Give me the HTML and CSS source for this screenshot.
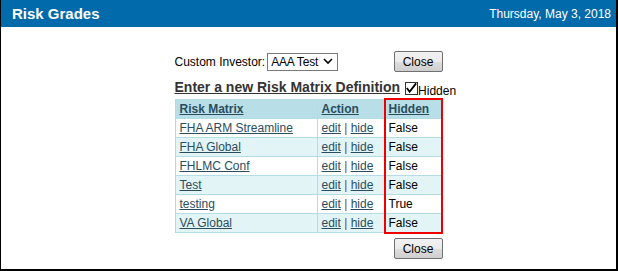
FILE: index.html
```html
<!DOCTYPE html>
<html lang="en">
<head>
  <meta charset="UTF-8" />
  <title>Risk Grades</title>
  <link rel="stylesheet" href="styles.css">
</head>
<body>
  <div class="frame">
    <!-- Title bar -->
    <header class="titlebar">
      <h1>Risk Grades</h1>
      <span class="date">Thursday, May 3, 2018</span>
    </header>

    <main class="panel">
      <div class="investor-row">
        <label class="investor">
          <span>Custom Investor:</span>
          <span class="select"><span>AAA Test</span>
            <svg width="10" height="7" viewBox="0 0 10 7"><path d="M1 1 L5 5 L9 1" fill="none" stroke="#000" stroke-width="1.6"/></svg>
          </span>
        </label>
        <button class="btn">Close</button>
      </div>

      <div class="title-row">
        <a class="new-link" href="#">Enter a new Risk Matrix Definition</a>
        <span class="check">
          <span class="box"><svg width="13" height="13" viewBox="0 0 13 13"><path d="M2 6 L5 10 L12 1" fill="none" stroke="#000" stroke-width="2"/></svg></span>
          <span class="check-label">Hidden</span>
        </span>
      </div>

      <div class="grid-wrap">
        <table class="grid">
          <thead>
            <tr><th class="c-name"><a href="#">Risk Matrix</a></th><th class="c-act"><a href="#">Action</a></th><th class="c-hid"><a href="#">Hidden</a></th></tr>
          </thead>
          <tbody>
            <tr><td><a href="#">FHA ARM Streamline</a></td><td><a href="#">edit</a> <span class="sep">|</span> <a href="#">hide</a></td><td>False</td></tr>
            <tr class="alt"><td><a href="#">FHA Global</a></td><td><a href="#">edit</a> <span class="sep">|</span> <a href="#">hide</a></td><td>False</td></tr>
            <tr><td><a href="#">FHLMC Conf</a></td><td><a href="#">edit</a> <span class="sep">|</span> <a href="#">hide</a></td><td>False</td></tr>
            <tr class="alt"><td><a href="#">Test</a></td><td><a href="#">edit</a> <span class="sep">|</span> <a href="#">hide</a></td><td>False</td></tr>
            <tr><td><a href="#">testing</a></td><td><a href="#">edit</a> <span class="sep">|</span> <a href="#">hide</a></td><td>True</td></tr>
            <tr class="alt"><td><a href="#">VA Global</a></td><td><a href="#">edit</a> <span class="sep">|</span> <a href="#">hide</a></td><td>False</td></tr>
          </tbody>
        </table>
        <!-- callout box drawn over the Hidden column -->
        <div class="highlight"></div>
      </div>

      <div class="footer-row">
        <button class="btn">Close</button>
      </div>
    </main>
  </div>
</body>
</html>
```

FILE: styles.css
```css
* {
  margin: 0;
  padding: 0;
  box-sizing: border-box;
}
body {
  font-family: "Liberation Sans", Arial, sans-serif;
  font-size: 12px;
  color: #000;
  background: #fff;
}

/* Outer frame */
.frame {
  width: 618px;
  height: 271px;
  border: 1px solid #000;
  border-top: none;
  border-right-width: 2px;
  border-bottom-width: 2px;
  overflow: hidden;
}

/* Title bar */
.titlebar {
  height: 27px;
  background-color: #006aab;
  color: #fff;
  display: flex;
  align-items: center;
  justify-content: space-between;
  padding: 0 5px 0 11px;
}
.titlebar h1 {
  font-size: 15px;
  font-weight: bold;
}
.date {
  font-size: 12px;
}

/* Content panel */
.panel {
  width: 268px;
  margin: 24px auto 0;
}
.investor-row {
  display: flex;
  justify-content: space-between;
  align-items: center;
  height: 21px;
}
.investor {
  display: flex;
  align-items: center;
  gap: 2px;
  white-space: nowrap;
}
.select {
  display: inline-flex;
  align-items: center;
  justify-content: space-between;
  width: 71px;
  height: 18px;
  padding: 0 4px 0 3px;
  border: 1px solid #7a7a7a;
  font-size: 12px;
  letter-spacing: -0.2px;
}
.btn {
  width: 49px;
  height: 21px;
  font-family: "Liberation Sans", Arial, sans-serif;
  font-size: 12px;
  color: #000;
  border: 1px solid #707070;
  border-radius: 2px;
  background: linear-gradient(#f2f2f2, #ebebeb 50%, #dddddd 51%, #cfcfcf);
}

.title-row {
  display: flex;
  align-items: flex-end;
  margin-top: 7px;
  height: 16px;
  white-space: nowrap;
}
.new-link {
  font-size: 14px;
  font-weight: bold;
  color: #333;
  text-decoration: underline;
}
.check {
  display: flex;
  align-items: flex-end;
  margin-left: 5px;
}
.box {
  width: 13px;
  height: 13px;
  border: 1px solid #333;
  background: #fff;
  display: flex;
}
.box svg {
  margin: -1px 0 0 -1px;
}
.check-label {
  font-size: 12px;
  margin-bottom: -3px;
}

/* Grid */
.grid-wrap {
  position: relative;
  margin-top: 4px;
}
.grid {
  width: 100%;
  border-collapse: collapse;
  border: 1px solid #b4dde5;
}
.grid th,
.grid td {
  height: 19px;
  padding: 0 4px;
  text-align: left;
  border: 1px solid #b4dde5;
  font-size: 12px;
  white-space: nowrap;
}
.grid th {
  background: #b8dfe7;
  font-weight: bold;
}
.grid th a {
  color: #2a4d5e;
}
.grid td a {
  color: #2a4d5e;
}
.grid tr.alt td {
  background: #e3f4f6;
}
.c-name { width: 142px; }
.c-act { width: 67px; }
.sep {
  color: #7a3a5a;
}
.highlight {
  position: absolute;
  top: -1px;
  right: 0;
  width: 59px;
  bottom: -1px;
  border: 2px solid #ee0000;
}

.footer-row {
  display: flex;
  justify-content: flex-end;
  margin-top: 5px;
}
```
